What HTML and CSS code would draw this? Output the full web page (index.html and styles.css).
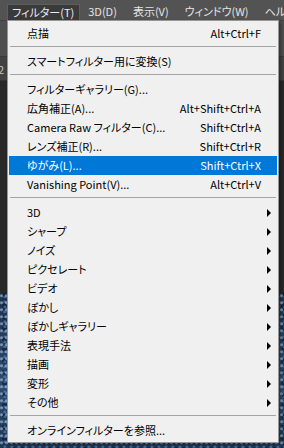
FILE: index.html
```html
<!DOCTYPE html>
<html lang="ja">
<head>
    <meta charset="UTF-8">
    <meta name="viewport" content="width=device-width, initial-scale=1.0">
    <title>フィルター メニュー</title>

    <link rel="stylesheet" href="styles.css">
</head>
<body>

    <div class="screen">
        <!-- Application menu bar -->
        <div class="menubar">
            <span class="mb-item active">フィルター(T)</span>
            <span class="mb-item">3D(D)</span>
            <span class="mb-item">表示(V)</span>
            <span class="mb-item">ウィンドウ(W)</span>
            <span class="mb-item">ヘルプ(H)</span>
        </div>

        <!-- Workspace behind the open menu -->
        <div class="optionsbar"></div>
        <div class="tabbar"><span class="tab">2</span></div>
        <div class="canvas-area"></div>
        <div class="photo"></div>

        <!-- Filter dropdown -->
        <div class="menu">
            <div class="item"><span>点描</span><span class="key">Alt+Ctrl+F</span></div>
            <div class="sep"></div>
            <div class="item"><span>スマートフィルター用に変換(S)</span></div>
            <div class="sep"></div>
            <div class="item"><span>フィルターギャラリー(G)...</span></div>
            <div class="item"><span>広角補正(A)...</span><span class="key">Alt+Shift+Ctrl+A</span></div>
            <div class="item"><span>Camera Raw フィルター(C)...</span><span class="key">Shift+Ctrl+A</span></div>
            <div class="item"><span>レンズ補正(R)...</span><span class="key">Shift+Ctrl+R</span></div>
            <div class="item hl"><span>ゆがみ(L)...</span><span class="key">Shift+Ctrl+X</span></div>
            <div class="item"><span>Vanishing Point(V)...</span><span class="key">Alt+Ctrl+V</span></div>
            <div class="sep"></div>
            <div class="item"><span>3D</span><span></span><i class="arrow"></i></div>
            <div class="item"><span>シャープ</span><span></span><i class="arrow"></i></div>
            <div class="item"><span>ノイズ</span><span></span><i class="arrow"></i></div>
            <div class="item"><span>ピクセレート</span><span></span><i class="arrow"></i></div>
            <div class="item"><span>ビデオ</span><span></span><i class="arrow"></i></div>
            <div class="item"><span>ぼかし</span><span></span><i class="arrow"></i></div>
            <div class="item"><span>ぼかしギャラリー</span><span></span><i class="arrow"></i></div>
            <div class="item"><span>表現手法</span><span></span><i class="arrow"></i></div>
            <div class="item"><span>描画</span><span></span><i class="arrow"></i></div>
            <div class="item"><span>変形</span><span></span><i class="arrow"></i></div>
            <div class="item"><span>その他</span><span></span><i class="arrow"></i></div>
            <div class="sep"></div>
            <div class="item"><span>オンラインフィルターを参照...</span></div>
        </div>
    </div>

</body>
</html>
```

FILE: styles.css
```css
* {
    box-sizing: border-box;
}
body {
    margin: 0;
    background-color: #282828;
    font-family: "Noto Sans CJK JP", "Liberation Sans", sans-serif;
    font-size: 11px;
    font-feature-settings: "palt";
}
.screen {
    position: relative;
    width: 284px;
    height: 448px;
    overflow: hidden;
    display: flex;
    flex-direction: column;
}
.menubar {
    flex: none;
    height: 20px;
    background-color: #535353;
    display: flex;
    align-items: flex-end;
    padding-left: 7px;
    color: #e4e4e4;
    white-space: nowrap;
}
.mb-item {
    height: 16px;
    line-height: 15px;
    padding: 0 8px;
}
.mb-item.active {
    background-color: #3a3a3a;
    border: 1px solid #5e5e5e;
    border-bottom: none;
    padding: 0 5px 0 4px;
    color: #e8eef6;
}
.optionsbar {
    flex: none;
    height: 37px;
    background-color: #4f4f4f;
    border-top: 1px solid #424242;
    border-bottom: 1px solid #393939;
}
.tabbar {
    flex: none;
    height: 24px;
    background-color: #424242;
    color: #c8c8c8;
    line-height: 24px;
    border-bottom: 1px solid #333;
}
.tab {
    margin-left: -2px;
}
.canvas-area {
    flex: none;
    height: 212px;
    background-color: #282828;
}
.photo {
    flex: 1;
    background-color: #1d3756;
    background-image:
        radial-gradient(circle at 30% 40%, rgba(190, 210, 230, 0.55) 0 1px, transparent 2px),
        radial-gradient(circle at 70% 80%, rgba(120, 150, 190, 0.5) 0 1px, transparent 2px),
        radial-gradient(circle at 50% 20%, rgba(10, 25, 50, 0.6) 0 2px, transparent 3px),
        linear-gradient(180deg, #1a3150, #2a4c72 60%, #1c3656);
    background-size: 5px 7px, 7px 5px, 9px 11px, 100% 100%;
}
.menu {
    position: absolute;
    left: 7px;
    top: 20px;
    width: 272px;
    height: 423px;
    padding: 3px 1px 2px;
    background-color: #f0f0f0;
    border: 1px solid #979797;
    box-shadow: 2px 2px 3px rgba(0, 0, 0, 0.35);
    color: #000;
}
.item {
    display: grid;
    grid-template-columns: 1fr auto 16px;
    align-items: center;
    height: 19px;
    line-height: 19px;
    padding-left: 18px;
    white-space: nowrap;
}
.item.hl {
    background-color: #0078d7;
    color: #fff;
}
.sep {
    height: 9px;
    padding: 3px 1px 0;
}
.sep::before {
    content: "";
    display: block;
    border-top: 1px solid #a5a5a5;
}
.arrow {
    width: 0;
    height: 0;
    margin-left: 6px;
    border-left: 4px solid #000;
    border-top: 4px solid transparent;
    border-bottom: 4px solid transparent;
}
```
